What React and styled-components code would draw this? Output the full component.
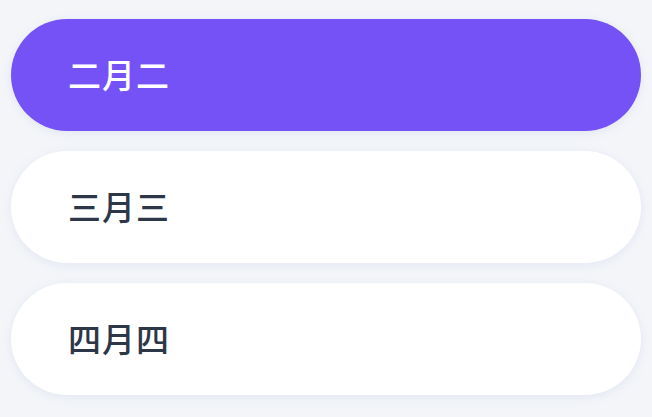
import React from "react";
import styled, { createGlobalStyle } from "styled-components";

const Global = createGlobalStyle`
  html, body { margin: 0; padding: 0; background: #f3f5f9; }
  body { font-family: "Noto Sans CJK SC", "Noto Sans", sans-serif; }
`;

const List = styled.div`
  display: flex;
  flex-direction: column;
  gap: 20px;
  padding: 19px 11px;
`;

const Item = styled.div`
  height: 112px;
  border-radius: 56px;
  display: flex;
  align-items: center;
  padding-left: 57px;
  padding-bottom: 3px;
  box-sizing: border-box;
  font-size: 33px;
  font-weight: 500;
  letter-spacing: 1px;
  background: ${(p) => (p.$active ? "#7452f5" : "#ffffff")};
  color: ${(p) => (p.$active ? "#ffffff" : "#2d3748")};
  box-shadow: 0 2px 8px rgba(180, 190, 220, 0.25);
`;

const items = ["二月二", "三月三", "四月四"];

export default function App() {
  return (
    <>
      <Global />
      <List>
        {items.map((t, i) => (
          <Item key={t} $active={i === 0}>
            {t}
          </Item>
        ))}
      </List>
    </>
  );
}
